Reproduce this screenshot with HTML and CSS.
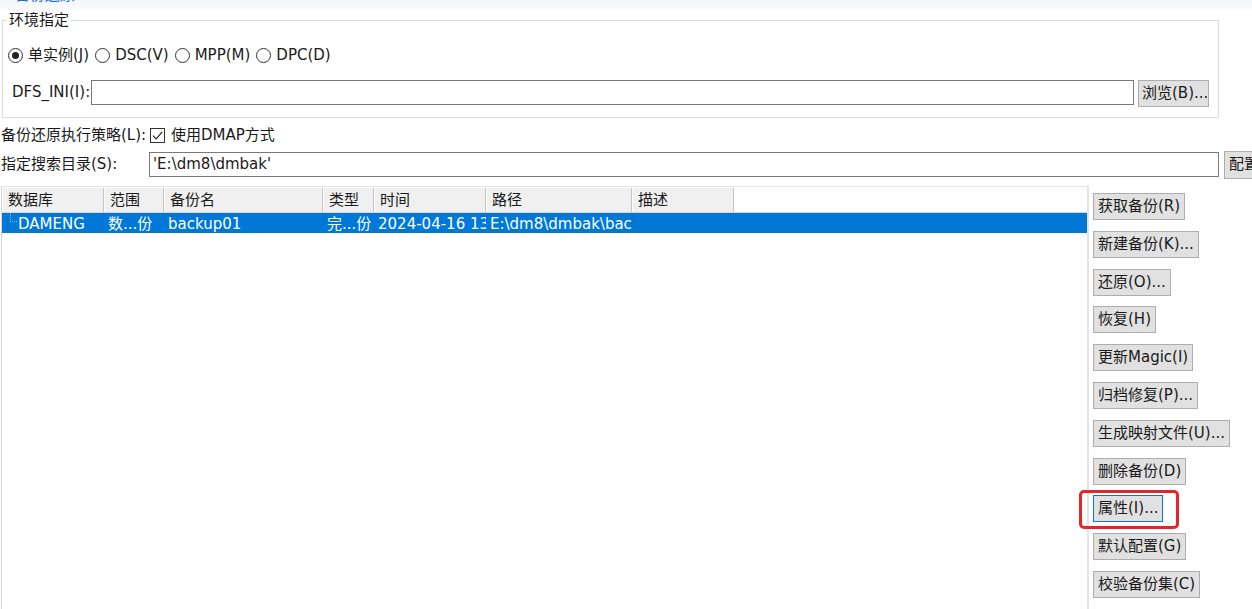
FILE: index.html
```html
<!DOCTYPE html>
<html lang="zh-CN">
<head>
<meta charset="utf-8">
<title>备份还原</title>
<link rel="stylesheet" href="styles.css">
</head>
<body>
<div class="topstrip"><span class="title">备份还原</span></div>

<fieldset class="env">
  <legend>环境指定</legend>
  <div class="radios">
    <span class="radio checked"><i class="circle"></i>单实例(J)</span>
    <span class="radio"><i class="circle"></i>DSC(V)</span>
    <span class="radio"><i class="circle"></i>MPP(M)</span>
    <span class="radio"><i class="circle"></i>DPC(D)</span>
  </div>
  <div class="dfs-row">
    <span class="dfs-label">DFS_INI(I):</span>
    <span class="textbox dfs-input"></span>
    <span class="btn browse">浏览(B)...</span>
  </div>
</fieldset>

<div class="strategy">
  <span class="strategy-label">备份还原执行策略(L):</span>
  <span class="checkbox"><svg viewBox="0 0 15 15" width="15" height="15"><path d="M3 7.6 L6.2 10.8 L12.2 3.8" fill="none" stroke="#222" stroke-width="1.2"/></svg></span>
  <span class="check-text">使用DMAP方式</span>
</div>

<div class="search">
  <span class="search-label">指定搜索目录(S):</span>
  <span class="textbox search-input">'E:\dm8\dmbak'</span>
  <span class="btn config">配置</span>
</div>

<div class="main">
  <div class="table">
    <div class="thead">
      <span class="th c1">数据库</span>
      <span class="th c2">范围</span>
      <span class="th c3">备份名</span>
      <span class="th c4">类型</span>
      <span class="th c5">时间</span>
      <span class="th c6">路径</span>
      <span class="th c7">描述</span>
      <span class="th-fill"></span>
    </div>
    <div class="row selected">
      <span class="td c1"><i class="tree"></i>DAMENG</span>
      <span class="td c2">数...份</span>
      <span class="td c3">backup01</span>
      <span class="td c4">完...份</span>
      <span class="td c5">2024-04-16 13:25:10</span>
      <span class="td c6">E:\dm8\dmbak\backup01</span>
      <span class="td c7"></span>
    </div>
  </div>
  <div class="actions">
    <span class="btn">获取备份(R)</span>
    <span class="btn">新建备份(K)...</span>
    <span class="btn">还原(O)...</span>
    <span class="btn">恢复(H)</span>
    <span class="btn">更新Magic(I)</span>
    <span class="btn">归档修复(P)...</span>
    <span class="btn">生成映射文件(U)...</span>
    <span class="btn">删除备份(D)</span>
    <span class="btn focus">属性(I)...<i class="highlight"></i></span>
    <span class="btn">默认配置(G)</span>
    <span class="btn">校验备份集(C)</span>
  </div>
</div>
</body>
</html>
```

FILE: styles.css
```css
html, body {
  margin: 0;
  padding: 0;
  background: #ffffff;
  overflow: hidden;
}
body {
  width: 1252px;
  height: 609px;
  font-family: "DejaVu Sans", "Noto Sans CJK SC", sans-serif;
  font-size: 15px;
  line-height: 20px;
  color: #1a1a1a;
}

.topstrip {
  height: 10px;
  overflow: hidden;
  background: linear-gradient(#f3f5f8, #fafbfc);
}
.topstrip .title {
  display: block;
  margin-top: -15px;
  margin-left: 15px;
  color: #1f6fd1;
  font-size: 15px;
  line-height: 20px;
}

.env {
  margin: 0 33px 0 2px;
  padding: 15px 0 10px 0;
  border: 1px solid #dcdcdc;
  min-width: 0;
}
.env legend {
  margin-left: 4px;
  padding: 0 2px;
  line-height: 20px;
}

.radios {
  display: flex;
  align-items: center;
  height: 20px;
  padding-left: 5px;
}
.radio {
  display: inline-flex;
  align-items: center;
  margin-right: 6px;
}
.circle {
  display: inline-block;
  box-sizing: border-box;
  width: 15px;
  height: 15px;
  border: 1px solid #333;
  border-radius: 50%;
  margin-right: 5px;
  position: relative;
}
.radio.checked .circle::after {
  content: "";
  position: absolute;
  left: 3px;
  top: 3px;
  width: 7px;
  height: 7px;
  border-radius: 50%;
  background: #222;
}

.dfs-row {
  display: flex;
  align-items: flex-start;
  margin-top: 15px;
  height: 27px;
}
.dfs-label {
  width: 79px;
  padding-left: 9px;
  line-height: 25px;
  white-space: nowrap;
}
.textbox {
  box-sizing: border-box;
  height: 25px;
  border: 1px solid #7a7a7a;
  background: #fff;
  line-height: 23px;
  padding-left: 3px;
  white-space: nowrap;
}
.dfs-input {
  width: 1043px;
}
.btn {
  display: inline-block;
  box-sizing: border-box;
  height: 27px;
  line-height: 25px;
  padding: 0 4px;
  background: #e1e1e1;
  border: 1px solid #adadad;
  white-space: nowrap;
  position: relative;
}
.browse {
  margin-left: 4px;
  width: 71px;
  padding: 0 3px;
}

.strategy {
  display: flex;
  align-items: center;
  height: 20px;
  margin-top: 7px;
  padding-left: 1px;
}
.strategy-label {
  width: 149px;
  white-space: nowrap;
}
.checkbox {
  box-sizing: border-box;
  width: 15px;
  height: 15px;
  border: 1px solid #333;
  display: inline-flex;
  align-items: center;
  justify-content: center;
  margin-right: 6px;
}
.checkbox svg {
  display: block;
  margin: -1px;
}

.search {
  display: flex;
  align-items: flex-start;
  margin-top: 7px;
  padding-left: 1px;
  height: 28px;
  width: 1300px;
}
.search-label {
  width: 148px;
  line-height: 25px;
  white-space: nowrap;
}
.search-input {
  width: 1070px;
}
.config {
  margin-left: 5px;
  margin-top: -1px;
  height: 28px;
  width: 50px;
}

.main {
  display: flex;
  margin-top: 6px;
  height: 423px;
}
.table {
  width: 1085px;
  margin-left: 1px;
  border-left: 1px solid #d2d2da;
  border-top: 1px solid #e6e6e6;
  border-right: 2px solid #e4e4e4;
  padding-top: 1px;
  overflow: hidden;
}
.thead {
  display: flex;
  height: 24px;
  background: #f3f3f3;
  border-bottom: 1px solid #d6d6d6;
}
.th {
  box-sizing: border-box;
  padding-left: 5px;
  line-height: 25px;
  background: #f0f0f0;
  border-right: 1px solid #c4c4c4;
  border-left: 1px solid #ffffff;
  white-space: nowrap;
}
.th-fill {
  flex: 1;
  background: #ffffff;
}
.c1 { width: 102px; }
.c2 { width: 60px; }
.c3 { width: 159px; }
.c4 { width: 51px; }
.c5 { width: 112px; }
.c6 { width: 146px; }
.c7 { width: 102px; }

.row {
  display: flex;
  height: 20px;
}
.row.selected {
  background: #0078d7;
  color: #ffffff;
}
.td {
  box-sizing: border-box;
  height: 20px;
  padding-left: 4px;
  line-height: 23px;
  overflow: hidden;
  white-space: nowrap;
}
.td.c1 {
  display: flex;
  padding-left: 8px;
}
.tree {
  display: inline-block;
  width: 6px;
  height: 8px;
  border-left: 1px dotted #9cc6ee;
  border-bottom: 1px dotted #9cc6ee;
  margin-right: 1px;
}

.actions {
  display: flex;
  flex-direction: column;
  align-items: flex-start;
  gap: 10.8px;
  padding: 7px 0 0 4px;
}
.btn.focus {
  border-color: #0078d7;
}
.highlight {
  position: absolute;
  left: -15px;
  top: -6px;
  right: -17px;
  bottom: -8px;
  border: 3px solid #e8232a;
  border-radius: 5px;
}
```
